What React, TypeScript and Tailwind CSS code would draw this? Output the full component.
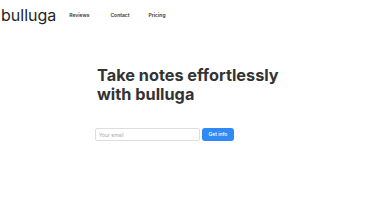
import { useState } from "react";

const NAV = [
  { label: "Reviews", cls: "ml-[13px]" },
  { label: "Contact", cls: "ml-[21px]" },
  { label: "Pricing", cls: "ml-[19px]" },
];

export default function App() {
  const [email, setEmail] = useState("");

  return (
    <div className="w-[392px] h-[222px] bg-white overflow-hidden" style={{ fontFamily: "Inter, 'Liberation Sans', sans-serif" }}>
      {/* Header */}
      <header className="flex items-center h-[30px]">
        <span className="text-[16px] leading-none text-[#1f1f1f] pl-[1px] -mt-[1px]">bulluga</span>
        <nav className="flex mt-[2px]">
          {NAV.map((n) => (
            <a key={n.label} href="#" className={`text-[5px] font-semibold text-[#333] no-underline ${n.cls}`}>
              {n.label}
            </a>
          ))}
        </nav>
      </header>

      {/* Hero */}
      <section className="pl-[97px] pt-[36px]">
        <h1 className="text-[16.3px] leading-[18.5px] font-bold text-[#333]">
          Take notes effortlessly
          <br />
          with bulluga
        </h1>
        <form className="flex items-center gap-[2px] mt-[25px] -ml-[2px]" onSubmit={(e) => e.preventDefault()}>
          <input
            type="email"
            value={email}
            onChange={(e) => setEmail(e.target.value)}
            placeholder="Your email"
            className="w-[105px] h-[13px] border border-[#ddd] rounded-[2px] px-[3px] text-[5px] text-[#333] placeholder-[#aaa] focus:outline-none"
          />
          <button className="h-[13px] w-[32px] rounded-[3px] bg-[#2f8af5] text-white text-[5px] font-medium">
            Get info
          </button>
        </form>
      </section>
    </div>
  );
}
